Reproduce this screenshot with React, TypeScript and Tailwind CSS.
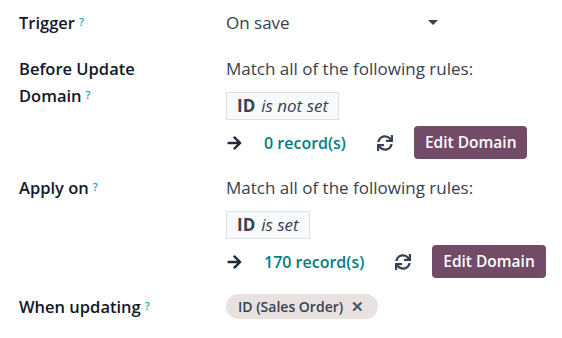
import React from 'react';

const font = { fontFamily: '"Open Sans", "Noto Sans", Arial, sans-serif' };

function Help() {
  return <sup className="ml-[4px] text-[11px] font-semibold text-[#17a2b8] relative -top-[3px]">?</sup>;
}

function RefreshIcon() {
  return (
    <svg width="16" height="16" viewBox="0 0 512 512" fill="#374151">
      <path d="M440.65 12.57l4 82.77A247.16 247.16 0 0 0 255.83 8C134.73 8 33.91 94.92 12.29 209.82A12 12 0 0 0 24.09 224h49.05a12 12 0 0 0 11.67-9.26 175.91 175.91 0 0 1 317-56.94l-101.46-4.86a12 12 0 0 0-12.57 12v47.41a12 12 0 0 0 12 12H500a12 12 0 0 0 12-12V12a12 12 0 0 0-12-12h-47.37a12 12 0 0 0-11.98 12.57zM255.83 432a175.61 175.61 0 0 1-146-77.8l101.8 4.87a12 12 0 0 0 12.57-12v-47.4a12 12 0 0 0-12-12H12a12 12 0 0 0-12 12V500a12 12 0 0 0 12 12h47.35a12 12 0 0 0 12-12.6l-4.150-82.57A247.17 247.17 0 0 0 255.83 504c121.11 0 221.93-86.92 243.55-201.82a12 12 0 0 0-11.8-14.18h-49.05a12 12 0 0 0-11.67 9.26A175.86 175.86 0 0 1 255.83 432z" />
    </svg>
  );
}

function ArrowIcon() {
  return (
    <svg width="17" height="16" viewBox="0 0 448 512" fill="#1f2937">
      <path d="M190.5 66.9l22.2-22.2c9.4-9.4 24.6-9.4 33.9 0L441 239c9.4 9.4 9.4 24.6 0 33.9L246.6 467.3c-9.4 9.4-24.6 9.4-33.9 0l-22.2-22.2c-9.5-9.5-9.3-25 .4-34.3L311.4 296H24c-13.3 0-24-10.7-24-24v-32c0-13.3 10.7-24 24-24h287.4L190.9 101.2c-9.8-9.3-10-24.8-.4-34.3z" />
    </svg>
  );
}

function DomainBlock({ condition, count }: { condition: string; count: string }) {
  return (
    <div className="flex flex-col items-start">
      <div className="leading-[27px] text-[#374151]">Match all of the following rules:</div>
      <div className="mt-[10px] h-[28px] flex items-center border border-[#dee2e6] bg-[#f8f9fa] px-[10px]">
        <span className="font-bold text-[#374151]">ID</span>
        <span className="ml-[6px] italic text-[#374151]">{condition}</span>
      </div>
      <div className="mt-[6px] h-[33px] flex items-center">
        <ArrowIcon />
        <span className="ml-[21px] text-[16px] font-semibold text-[#017e84]">{count}</span>
        <span className="ml-[31px]">
          <RefreshIcon />
        </span>
        <button className="ml-[21px] h-[33px] rounded-[4px] bg-[#714b67] px-[11px] text-[15.5px] font-semibold text-white">
          Edit Domain
        </button>
      </div>
    </div>
  );
}

export default function App() {
  return (
    <div className="w-[562px] h-[338px] bg-white text-[17px]" style={font}>
      <div className="pt-[9px] pl-[19px]">
        {/* Trigger */}
        <div className="flex">
          <div className="w-[207px] leading-[27px] text-[16.5px] font-semibold text-[#111827]">
            Trigger
            <Help />
          </div>
          <div className="w-[213px] flex items-center justify-between leading-[27px] text-[#374151]">
            <span>On save</span>
            <span className="mr-[1px] h-0 w-0 border-x-[5px] border-t-[5px] border-x-transparent border-t-[#374151]" />
          </div>
        </div>

        {/* Before Update Domain */}
        <div className="mt-[19px] flex">
          <div className="w-[207px] leading-[27px] text-[16.5px] font-semibold text-[#111827]">
            Before Update
            <br />
            Domain
            <Help />
          </div>
          <DomainBlock condition="is not set" count="0 record(s)" />
        </div>

        {/* Apply on */}
        <div className="mt-[15px] flex">
          <div className="w-[207px] leading-[27px] text-[16.5px] font-semibold text-[#111827]">
            Apply on
            <Help />
          </div>
          <DomainBlock condition="is set" count="170 record(s)" />
        </div>

        {/* When updating */}
        <div className="mt-[15px] flex">
          <div className="w-[207px] leading-[27px] text-[16.5px] font-semibold text-[#111827]">
            When updating
            <Help />
          </div>
          <div className="flex items-center">
            <span className="flex h-[25px] items-center rounded-full bg-[#e7e1df] pl-[12px] pr-[14px] text-[14px] font-semibold text-[#374151]">
              ID (Sales Order)
              <span className="ml-[8px] text-[15px] leading-none text-[#4b5563]">✕</span>
            </span>
          </div>
        </div>
      </div>
    </div>
  );
}
